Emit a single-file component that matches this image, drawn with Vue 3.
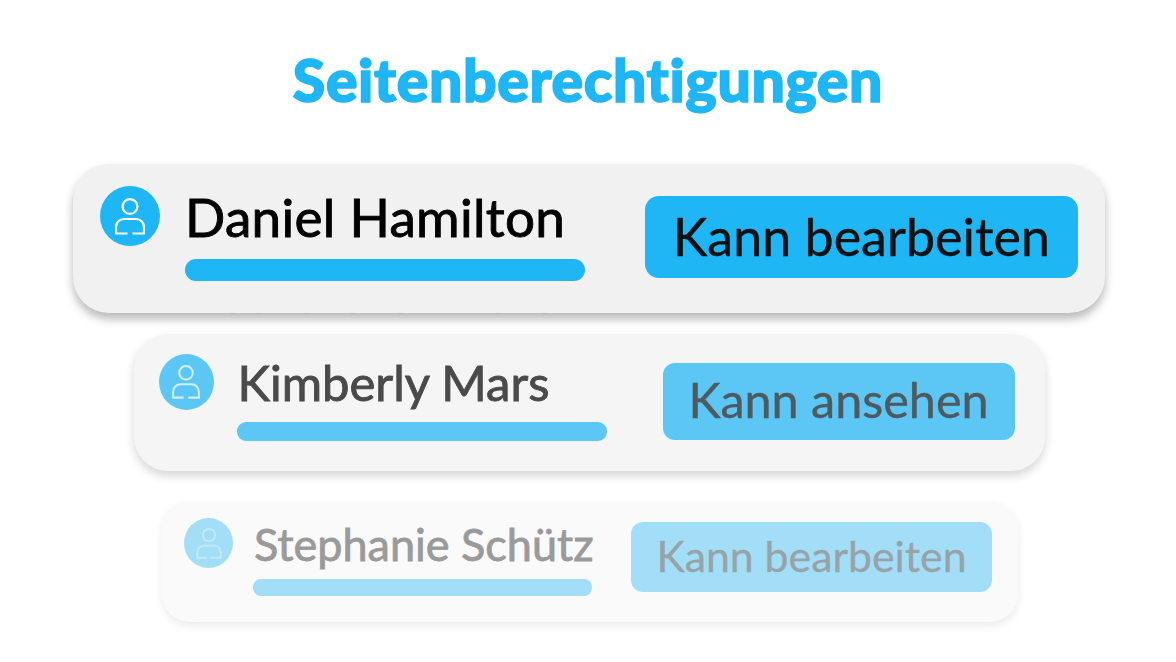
<template>
  <div class="page">
    <h1 class="title">Seitenberechtigungen</h1>
    <div class="cards">
      <div v-for="row in rows" :key="row.name" class="card" :class="row.tier">
        <div class="avatar">
          <svg class="user-icon" viewBox="0 0 30 37" fill="none" stroke="currentColor" stroke-width="2.2">
            <circle cx="15" cy="8.500" r="7.400" />
            <path d="M12.500 35.500H1V29a8 8 0 0 1 8-8H21a8 8 0 0 1 8 8V35.500H17.500" />
          </svg>
        </div>
        <div class="info">
          <div class="name">{{ row.name }}</div>
          <div class="bar"></div>
        </div>
        <div class="role">{{ row.role }}</div>
        <template v-if="row.tier === 'first'">
          <span v-for="x in ticks" :key="x" class="tick" :style="{ left: `${x}px` }"></span>
        </template>
      </div>
    </div>
  </div>
</template>

<script setup>
const rows = [
  { name: 'Daniel Hamilton', role: 'Kann bearbeiten', tier: 'first' },
  { name: 'Kimberly Mars', role: 'Kann ansehen', tier: 'second' },
  { name: 'Stephanie Schütz', role: 'Kann bearbeiten', tier: 'third' }
]

// little bits of the text hidden behind the top card
const ticks = [157, 183, 231, 277, 325, 422, 469]
</script>

<style>
html, body {
  background: #fff;
}
</style>

<style scoped>
.page {
  width: 1176px;
  height: 662px;
  overflow: hidden;
  background: #fff;
  display: flex;
  flex-direction: column;
  align-items: center;
  font-family: Lato, "Open Sans", sans-serif;
  font-variant-ligatures: none;
}

.title {
  margin: 42px 0 0;
  height: 76px;
  line-height: 76px;
  font-size: 59px;
  font-weight: 900;
  letter-spacing: 0.6px;
  color: #1eb6f5;
  text-align: center;
  -webkit-text-stroke: 1.6px #1eb6f5;
}

.cards {
  margin-top: 46px;
  padding-left: 2px;
  display: flex;
  flex-direction: column;
  align-items: center;
}

.card {
  position: relative;
  display: flex;
  align-items: flex-start;
  box-sizing: border-box;
}

.avatar {
  flex: none;
  border-radius: 50%;
  display: flex;
  align-items: center;
  justify-content: center;
  color: #fff;
}

.user-icon {
  display: block;
}

.info {
  flex: none;
  display: flex;
  flex-direction: column;
}

.name {
  white-space: nowrap;
  font-weight: 400;
}

.bar {
  width: 100%;
}

.role {
  flex: none;
  box-sizing: border-box;
  display: flex;
  align-items: center;
  justify-content: center;
  margin-left: auto;
  white-space: nowrap;
}

.tick {
  position: absolute;
  bottom: -1px;
  width: 6px;
  height: 1px;
  background: #b9b9b9;
}

.first {
  width: 1032px;
  height: 149px;
  padding: 22px 27px;
  border-radius: 36px;
  background: #f1f1f1;
  box-shadow: 0 6px 10px rgba(0, 0, 0, 0.28);
}

.first .avatar {
  width: 60px;
  height: 60px;
  background: #1eb6f5;
}

.first .user-icon {
  width: 30px;
  height: 37px;
}

.first .info {
  width: 400px;
  margin-left: 25px;
}

.first .name {
  height: 73px;
  line-height: 62px;
  font-size: 53px;
  letter-spacing: 0.3px;
  color: #000;
  -webkit-text-stroke: 0.9px #000;
}

.first .bar {
  height: 22px;
  border-radius: 11px;
  background: #1eb6f5;
}

.first .role {
  width: 433px;
  height: 82px;
  margin-top: 10px;
  padding-bottom: 2px;
  border-radius: 14px;
  background: #1eb6f5;
  font-size: 52px;
  color: #111;
  -webkit-text-stroke: 0.4px #111;
}

.second {
  width: 911px;
  height: 137px;
  margin-top: 21px;
  padding: 20px 30px 20px 25px;
  border-radius: 34px;
  background: #f5f5f5;
  box-shadow: 0 5px 10px rgba(0, 0, 0, 0.16);
}

.second .avatar {
  width: 55px;
  height: 56px;
  background: #5cc7f5;
  color: #cdeefb;
}

.second .user-icon {
  width: 28px;
  height: 34px;
}

.second .info {
  width: 370px;
  margin-left: 23px;
}

.second .name {
  height: 68px;
  padding-left: 1px;
  line-height: 57px;
  font-size: 49px;
  color: #4a4a4a;
  -webkit-text-stroke: 0.9px #4a4a4a;
}

.second .bar {
  height: 19px;
  border-radius: 9px;
  background: #5cc7f5;
}

.second .role {
  width: 352px;
  height: 77px;
  margin-top: 9px;
  padding-bottom: 5px;
  border-radius: 12px;
  background: #5cc7f5;
  font-size: 48.500px;
  color: #4f5a60;
  -webkit-text-stroke: 0.4px #4f5a60;
}

.third {
  width: 856px;
  height: 121px;
  margin-top: 30px;
  margin-left: 2px;
  padding: 17px 26px 17px 22px;
  border-radius: 28px;
  background: #fafafa;
  box-shadow: 0 4px 10px rgba(0, 0, 0, 0.08);
}

.third .avatar {
  width: 49px;
  height: 50px;
  background: #a2def8;
  color: #c4e9f9;
}

.third .user-icon {
  width: 26px;
  height: 31px;
}

.third .info {
  width: 339px;
  margin-left: 20px;
}

.third .name {
  height: 61px;
  padding-left: 1px;
  line-height: 52px;
  font-size: 45px;
  color: #9a9a9a;
  -webkit-text-stroke: 0.8px #9a9a9a;
}

.third .bar {
  height: 17px;
  border-radius: 8px;
  background: #a2def8;
}

.third .role {
  width: 361px;
  height: 70px;
  margin-top: 4px;
  padding-bottom: 4px;
  border-radius: 12px;
  background: #a2def8;
  font-size: 42.800px;
  color: #98a3a8;
  -webkit-text-stroke: 0.3px #98a3a8;
}
</style>
